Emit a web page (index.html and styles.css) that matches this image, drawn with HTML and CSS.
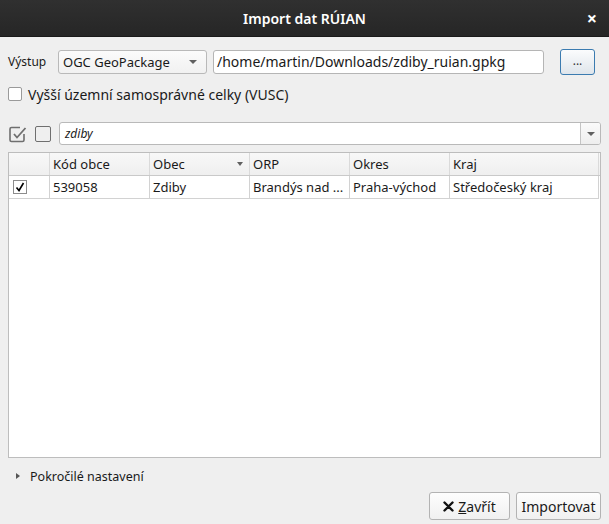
FILE: index.html
```html
<!DOCTYPE html>
<html>
<head>
<meta charset="utf-8">
<link rel="stylesheet" href="styles.css">
</head>
<body>
<div class="window">
  <div class="titlebar">
    <span class="title">Import dat RÚIAN</span>
    <span class="close">×</span>
  </div>
  <div class="content">
    <div class="row-output">
      <span class="label">Výstup</span>
      <div class="combo combo-format"><span>OGC GeoPackage</span><span class="arrow"></span></div>
      <div class="path-input">/home/martin/Downloads/zdiby_ruian.gpkg</div>
      <div class="btn-browse">...</div>
    </div>
    <div class="row-vusc">
      <span class="checkbox"></span>
      <span class="vusc-label">Vyšší územní samosprávné celky (VUSC)</span>
    </div>
    <div class="row-filter">
      <svg class="icon-checkall" width="20" height="20" viewBox="0 0 20 20">
        <path d="M16 10 V16 Q16 17.5 14.5 17.5 H3.5 Q2 17.5 2 16 V5 Q2 3.5 3.5 3.5 H12" fill="none" stroke="#6f6f6f" stroke-width="1.6"/>
        <path d="M6 10 L9 13.5 L17.5 4" fill="none" stroke="#6f6f6f" stroke-width="1.8"/>
      </svg>
      <span class="box-empty"></span>
      <div class="combo combo-filter"><span class="filter-text">zdiby</span><span class="drop"><span class="arrow"></span></span></div>
    </div>
    <div class="table">
      <div class="thead">
        <div class="th c0"></div>
        <div class="th c1">Kód obce</div>
        <div class="th c2">Obec<span class="sort"></span></div>
        <div class="th c3">ORP</div>
        <div class="th c4">Okres</div>
        <div class="th c5">Kraj</div>
      </div>
      <div class="tr">
        <div class="td c0"><span class="cb-checked"><svg width="10" height="10" viewBox="0 0 10 10"><path d="M1.5 5.5 L4 8.5 L8.5 1" fill="none" stroke="#000" stroke-width="1.6"/></svg></span></div>
        <div class="td c1">539058</div>
        <div class="td c2">Zdiby</div>
        <div class="td c3">Brandýs nad ...</div>
        <div class="td c4">Praha-východ</div>
        <div class="td c5">Středočeský kraj</div>
      </div>
    </div>
    <div class="row-advanced">
      <span class="tri"></span>
      <span class="adv-label">Pokročilé nastavení</span>
    </div>
    <div class="row-buttons">
      <div class="btn btn-close">
        <svg width="11" height="11" viewBox="0 0 11 11"><path d="M1.5 1.5 L9.5 9.5 M9.5 1.5 L1.5 9.5" stroke="#111" stroke-width="2.4" stroke-linecap="round"/></svg>
        <span><u>Z</u>avřít</span>
      </div>
      <div class="btn btn-import">Importovat</div>
    </div>
  </div>
</div>
</body>
</html>
```

FILE: styles.css
```css
* { box-sizing: border-box; }
html, body { margin: 0; padding: 0; }
body {
  width: 609px;
  height: 524px;
  background: #efefef;
  font-family: "Noto Sans", "Open Sans", sans-serif;
  color: #1a1a1a;
  overflow: hidden;
}
.window { width: 609px; height: 524px; display: flex; flex-direction: column; }
.titlebar {
  height: 37px;
  background: linear-gradient(#303030, #262626);
  border-bottom: 1px solid #1a1a1a;
  display: flex;
  align-items: center;
  justify-content: center;
  position: relative;
  color: #ffffff;
}
.title {
  font-size: 14px;
  font-weight: 600;
  font-stretch: condensed;
  margin-top: 1px;
}
.close {
  position: absolute;
  right: 12px;
  top: 8px;
  font-size: 18px;
  font-weight: bold;
  line-height: 20px;
}
.content {
  flex: 1;
  display: flex;
  flex-direction: column;
  padding: 0 8px 0 8px;
}
.row-output {
  margin-top: 12px;
  height: 25px;
  display: flex;
  align-items: center;
}
.label { font-size: 12px; width: 50px; }
.combo {
  height: 24px;
  background: linear-gradient(#fbfbfb, #f1f1f1);
  border: 1px solid #b9b9b9;
  border-radius: 3px;
  display: flex;
  align-items: center;
  justify-content: space-between;
  padding: 0 6px 0 4px;
  font-size: 13px;
}
.combo-format { width: 149px; }
.arrow {
  width: 0; height: 0;
  border-left: 4px solid transparent;
  border-right: 4px solid transparent;
  border-top: 4px solid #606060;
  margin-right: 3px;
}
.path-input {
  margin-left: 6px;
  width: 331px;
  height: 24px;
  background: #ffffff;
  border: 1px solid #b5b5b5;
  border-radius: 3px;
  font-size: 14px;
  line-height: 22px;
  padding-left: 3px;
  white-space: nowrap;
  overflow: hidden;
}
.btn-browse {
  margin-left: 16px;
  width: 35px;
  height: 26px;
  border: 1px solid #3b7bb0;
  border-radius: 3px;
  background: linear-gradient(#fbfcfd, #dfe5eb);
  font-size: 12px;
  color: #333;
  text-align: center;
  line-height: 22px;
}
.row-vusc {
  margin-top: 12px;
  height: 16px;
  display: flex;
  align-items: center;
}
.checkbox {
  width: 14px; height: 14px;
  background: #ffffff;
  border: 1px solid #9a9a9a;
  border-radius: 2px;
}
.vusc-label { margin-left: 6px; font-size: 14px; }
.row-filter {
  margin-top: 20px;
  height: 23px;
  display: flex;
  align-items: center;
}
.icon-checkall { margin-left: 0px; }
.box-empty {
  margin-left: 7px;
  width: 16px; height: 16px;
  border: 1.6px solid #6f6f6f;
  border-radius: 2px;
}
.combo-filter {
  margin-left: 8px;
  flex: 1;
  height: 23px;
  background: #ffffff;
  border: 1px solid #b9b9b9;
  padding: 0 0 0 5px;
  overflow: hidden;
}
.filter-text { font-style: italic; font-size: 12px; }
.drop {
  width: 20px;
  height: 100%;
  border-left: 1px solid #c4c4c4;
  background: linear-gradient(#fafafa, #eeeeee);
  display: flex;
  align-items: center;
  justify-content: center;
}
.drop .arrow { margin-right: 0; }
.table {
  margin-top: 7px;
  height: 306px;
  background: #ffffff;
  border: 1px solid #bdbdbd;
  display: flex;
  flex-direction: column;
}
.thead {
  height: 23px;
  display: flex;
  background: linear-gradient(#f8f8f8, #efefef);
  border-bottom: 1px solid #c9c9c9;
}
.tr {
  height: 23px;
  display: flex;
}
.th, .td {
  font-size: 13px;
  line-height: 22px;
  padding-left: 3px;
  white-space: nowrap;
  overflow: hidden;
  border-right: 1px solid #d2d2d2;
  position: relative;
}
.td { border-bottom: 1px solid #d2d2d2; }
.th { border-right-color: #dadada; }
.c0 { width: 41px; }
.c1 { width: 100px; }
.c2 { width: 100px; }
.c3 { width: 100px; }
.c4 { width: 100px; }
.c5 { width: 149px; }
.sort {
  position: absolute;
  right: 6px;
  top: 9px;
  width: 0; height: 0;
  border-left: 3.5px solid transparent;
  border-right: 3.5px solid transparent;
  border-top: 4px solid #606060;
}
.cb-checked {
  display: inline-flex;
  align-items: center;
  justify-content: center;
  margin-left: 1px;
  margin-top: 4px;
  width: 14px; height: 14px;
  border: 1px solid #8c8c8c;
  background: #fff;
  vertical-align: top;
}
.td.c0 { padding-left: 3px; }
.row-advanced {
  margin-top: 11px;
  height: 14px;
  display: flex;
  align-items: center;
}
.tri {
  margin-left: 8px;
  width: 0; height: 0;
  border-top: 3.5px solid transparent;
  border-bottom: 3.5px solid transparent;
  border-left: 4px solid #555;
}
.adv-label {
  margin-left: 10px;
  font-size: 12.5px;
  font-stretch: condensed;
}
.row-buttons {
  margin-top: 9px;
  display: flex;
  justify-content: flex-end;
  gap: 6px;
}
.btn {
  height: 28px;
  border: 1px solid #b3b3b3;
  border-radius: 3px;
  background: linear-gradient(#fdfdfd, #f0f0f0);
  display: flex;
  align-items: center;
  justify-content: center;
  font-size: 14px;
}
.btn-close { width: 81px; gap: 4px; }
.btn-close span { font-stretch: condensed; }
.btn-import { width: 85px; }
```
